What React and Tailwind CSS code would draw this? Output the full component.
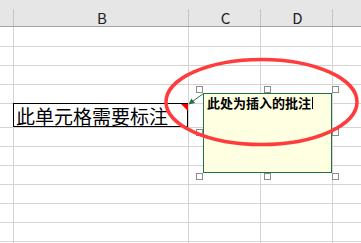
import React from 'react';

const rowHeights = ['h-[20px]', 'h-[19px]', 'h-[19px]', 'h-[19px]', 'h-[24px]', 'h-[19px]', 'h-[19px]', 'h-[19px]', 'h-[19px]', 'h-[19px]', 'h-[19px]', 'h-[19px]'];
const NOTE_ROW = 4;

function Handle({ className }) {
  return <div className={`absolute w-[7px] h-[7px] border border-[#8c8c8c] bg-white ${className}`} />;
}

function CommentBox() {
  return (
    <div className="absolute left-[203px] top-[93px] w-[129px] h-[80px] border border-[#217346] bg-[#ffffe1]">
      <div className="pl-[3px] pt-[1px] text-[13px] leading-[16px] font-bold text-black flex items-center">
        <span>此处为插入的批注</span>
        <span className="inline-block w-px h-[12px] bg-black ml-[1px]" />
      </div>
      <Handle className="-left-[8px] -top-[8px]" />
      <Handle className="left-[60px] -top-[8px]" />
      <Handle className="left-[128px] -top-[8px]" />
      <Handle className="-left-[8px] top-[35px]" />
      <Handle className="left-[128px] top-[35px]" />
      <Handle className="-left-[8px] top-[79px]" />
      <Handle className="left-[60px] top-[79px]" />
      <Handle className="left-[128px] top-[79px]" />
    </div>
  );
}

export default function App() {
  return (
    <div className="relative w-[361px] h-[243px] overflow-hidden bg-white font-['Noto_Sans_CJK_SC','Noto_Sans',sans-serif]">
      {/* column headers */}
      <div className="h-[27px] bg-[#e6e6e6] pt-[9px]">
        <div className="grid grid-cols-[14px_175px_72px_72px_1fr] h-[18px] border-b border-[#a3a3a3] text-[15px] leading-[17px] text-[#222]">
          <div className="border-r border-[#c4c4c4]" />
          <div className="border-r border-[#c4c4c4] text-center pl-[2px]">B</div>
          <div className="border-r border-[#c4c4c4] text-center pl-[2px]">C</div>
          <div className="border-r border-[#c4c4c4] text-center pl-[2px]">D</div>
          <div />
        </div>
      </div>

      {/* grid rows */}
      {rowHeights.map((h, i) => (
        <div key={i} className={`grid grid-cols-[14px_175px_72px_72px_1fr] ${h}`}>
          <div className="border-r border-b border-[#d4d4d4]" />
          <div className="relative border-r border-b border-[#d4d4d4]">
            {i === NOTE_ROW && (
              <>
                <div className="absolute -left-px -top-px right-0 bottom-0 border border-black" />
                <div className="pl-[2px] pt-[1px] text-[19px] leading-[22px] text-black whitespace-nowrap">此单元格需要标注</div>
                <svg className="absolute right-0 top-0" width="7" height="7" viewBox="0 0 7 7">
                  <polygon points="0,0 7,0 7,7" fill="#ff0000" />
                </svg>
              </>
            )}
          </div>
          <div className="border-r border-b border-[#d4d4d4]" />
          <div className="border-r border-b border-[#d4d4d4]" />
          <div className="border-b border-[#d4d4d4]" />
        </div>
      ))}

      <CommentBox />

      {/* callout arrow and red ellipse annotation */}
      <svg className="absolute left-0 top-0 pointer-events-none" width="361" height="243" viewBox="0 0 361 243">
        <line x1="203.5" y1="93.5" x2="191" y2="102.5" stroke="#217346" strokeWidth="1" />
        <polygon points="188.5,104.5 195.1,103.1 191.3,98.4" fill="#217346" />
        <ellipse cx="261.5" cy="102" rx="95.5" ry="42.5" fill="none" stroke="#ff3b3b" strokeWidth="3.5" />
      </svg>
    </div>
  );
}
